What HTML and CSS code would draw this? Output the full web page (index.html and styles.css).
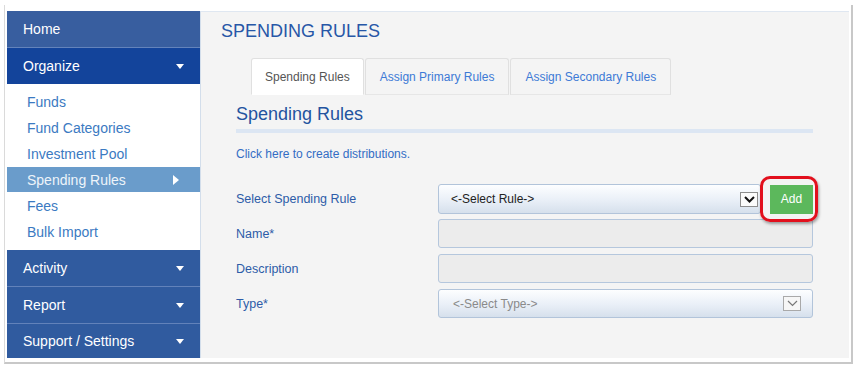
FILE: index.html
```html
<!DOCTYPE html>
<html>
<head>
<meta charset="utf-8">
<link rel="stylesheet" href="styles.css">
</head>
<body>
<div class="shot">
  <div class="app">
    <nav class="sidebar">
      <div class="nav-item home">Home</div>
      <div class="nav-item organize">Organize<span class="caret-down"></span></div>
      <ul class="sub">
        <li>Funds</li>
        <li>Fund Categories</li>
        <li>Investment Pool</li>
        <li class="active">Spending Rules<span class="caret-right"></span></li>
        <li>Fees</li>
        <li>Bulk Import</li>
      </ul>
      <div class="nav-item sec first">Activity<span class="caret-down"></span></div>
      <div class="nav-item sec">Report<span class="caret-down"></span></div>
      <div class="nav-item sec last">Support / Settings<span class="caret-down"></span></div>
    </nav>
    <main class="main">
      <h1 class="page-title">SPENDING RULES</h1>
      <div class="panel">
        <div class="tabs">
          <div class="tab active">Spending Rules</div>
          <div class="tab">Assign Primary Rules</div>
          <div class="tab">Assign Secondary Rules</div>
        </div>
        <h2 class="section-title">Spending Rules</h2>
        <div class="rule-bar"></div>
        <a class="link">Click here to create distributions.</a>
        <div class="form">
          <div class="row">
            <label class="label">Select Spending Rule</label>
            <div class="control-group">
              <div class="select first-select">
                <span class="select-text">&lt;-Select Rule-&gt;</span>
                <span class="arrow-box dark">
                  <svg width="11" height="7" viewBox="0 0 11 7"><path d="M1 1 L5.5 5.5 L10 1" fill="none" stroke="#111" stroke-width="2"/></svg>
                </span>
              </div>
              <div class="add-wrap">
                <button class="btn-add">Add</button>
                <span class="ring"></span>
              </div>
            </div>
          </div>
          <div class="row">
            <label class="label">Name*</label>
            <div class="input"></div>
          </div>
          <div class="row">
            <label class="label">Description</label>
            <div class="input"></div>
          </div>
          <div class="row">
            <label class="label">Type*</label>
            <div class="select type-select">
              <span class="select-text muted">&lt;-Select Type-&gt;</span>
              <span class="arrow-box light">
                <svg width="11" height="7" viewBox="0 0 11 7"><path d="M1 1 L5.5 5.5 L10 1" fill="none" stroke="#777" stroke-width="1.2"/></svg>
              </span>
            </div>
          </div>
        </div>
      </div>
    </main>
  </div>
</div>
</body>
</html>
```

FILE: styles.css
```css
* { box-sizing: border-box; }
html, body { margin: 0; padding: 0; background: #fff; }
body { font-family: "Liberation Sans", Arial, sans-serif; }

.shot {
  margin: 5px 0 0 4px;
  width: 849px;
  height: 359px;
  border-left: 1px solid #dadada;
  border-right: 2px solid #c8c8c8;
  border-bottom: 2px solid #c8c8c8;
  padding: 6px 3px 4px 2px;
  background: #fff;
}

.app {
  display: flex;
  width: 841px;
  height: 347px;
}

/* Sidebar */
.sidebar {
  width: 193px;
  flex: none;
  display: flex;
  flex-direction: column;
  background: #fff;
}
.nav-item {
  height: 36px;
  display: flex;
  align-items: center;
  justify-content: space-between;
  padding: 0 16px 0 16px;
  color: #fff;
  font-size: 14px;
}
.home {
  background: #385e9f;
  height: 37px;
  border-bottom: 1px solid #6383bb;
}
.organize { background: #13449b; }
.sec {
  background: #305b9f;
  height: 37px;
  border-top: 1px solid #6282ba;
}
.sec.first { border-top: none; height: 36px; }
.sec.last { height: 35px; }

.caret-down {
  width: 0; height: 0;
  border-left: 4px solid transparent;
  border-right: 4px solid transparent;
  border-top: 5px solid #fff;
}
.caret-right {
  width: 0; height: 0;
  border-top: 5px solid transparent;
  border-bottom: 5px solid transparent;
  border-left: 6px solid #fff;
}

.sub {
  list-style: none;
  margin: 0;
  padding: 5px 0;
  height: 166px;
  background: #fff;
}
.sub li {
  height: 26px;
  display: flex;
  align-items: center;
  justify-content: space-between;
  padding: 0 21px 0 20px;
  color: #3b7ac2;
  font-size: 14px;
}
.sub li.active {
  background: #6a9ccb;
  color: #eef4fa;
  height: 25px;
  margin-bottom: 1px;
}

/* Main */
.main {
  flex: 1;
  background: #f4f4f4;
  border-left: 1px solid #d3deeb;
  border-top: 1px solid #dfe7f1;
  padding: 8px 36px 0 20px;
}
.page-title {
  margin: 0;
  font-size: 18px;
  line-height: 22px;
  font-weight: normal;
  color: #2757a7;
}
.panel {
  margin-left: 15px;
  margin-top: 16px;
}
.tabs {
  display: flex;
  gap: 1px;
  margin-left: 15px;
  height: 37px;
}
.tab {
  height: 37px;
  padding: 0 14px;
  display: flex;
  align-items: center;
  font-size: 12px;
  color: #3d7ad6;
  border: 1px solid #e0e0e0;
  border-bottom: 1px solid #e6e6e6;
  border-radius: 3px 3px 0 0;
  background: #f4f4f4;
}
.tab.active {
  background: #fff;
  color: #555;
  border-bottom-color: #fff;
  padding: 0 13px;
}
.section-title {
  margin: 8px 0 0 0;
  font-size: 18px;
  line-height: 22px;
  font-weight: normal;
  color: #23539f;
}
.rule-bar {
  margin-top: 4px;
  height: 4px;
  background: #dce6f3;
}
.link {
  display: block;
  margin-top: 13px;
  font-size: 12px;
  line-height: 16px;
  color: #336dc4;
}

.form { margin-top: 22px; }
.row {
  display: flex;
  align-items: center;
  height: 29px;
  margin-bottom: 6px;
}
.row:first-child { height: 30px; margin-bottom: 5px; }
.label {
  width: 202px;
  flex: none;
  font-size: 12.5px;
  color: #2d5ca8;
}
.control-group {
  flex: 1;
  display: flex;
  align-items: center;
  height: 30px;
}
.select {
  height: 100%;
  display: flex;
  align-items: center;
  justify-content: space-between;
  border: 1px solid #b2c4da;
  border-radius: 3px;
  background: linear-gradient(#fdfeff, #e9eff7 55%, #d6e0ec);
  font-size: 12px;
}
.first-select {
  width: 323px;
  padding: 0 2px 0 12px;
}
.type-select {
  flex: 1;
  height: 29px;
  padding: 0 11px 0 14px;
}
.select-text { color: #222; }
.select-text.muted { color: #8a8a8a; }
.arrow-box {
  width: 18px;
  height: 15px;
  display: flex;
  align-items: center;
  justify-content: center;
  background: #fbfbfb;
}
.arrow-box.dark { border: 1px solid #8d8d8d; }
.arrow-box.light { border: 1px solid #a9a9a9; background: #f6f6f6; }

.add-wrap {
  position: relative;
  margin-left: 9px;
  width: 43px;
  height: 29px;
}
.btn-add {
  width: 100%;
  height: 100%;
  border: none;
  background: #5cb85c;
  color: #fff;
  font-family: "Liberation Sans", Arial, sans-serif;
  font-size: 12px;
  padding: 0;
}
.ring {
  position: absolute;
  left: -10px;
  right: -5px;
  top: -9px;
  bottom: -8px;
  border: 3px solid #e2101d;
  border-radius: 10px;
  box-shadow: 1px 2px 3px rgba(0,0,0,0.35);
}

.input {
  flex: 1;
  height: 29px;
  border: 1px solid #b5c7dd;
  border-radius: 3px;
  background: #ececec;
}
```
